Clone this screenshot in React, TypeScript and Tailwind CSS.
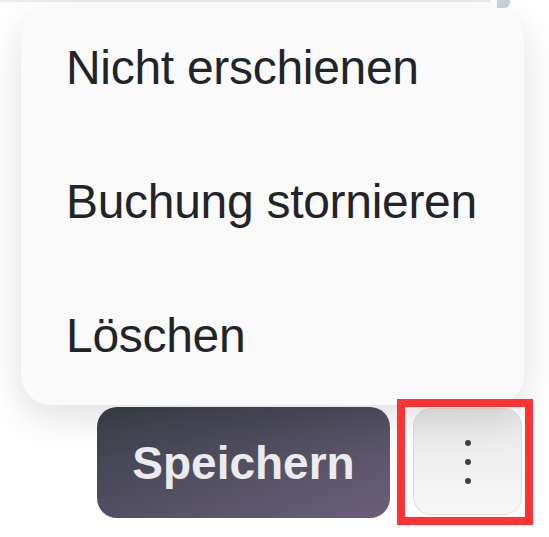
import React from "react";

const items = ["Nicht erschienen", "Buchung stornieren", "Löschen"];

const App: React.FC = () => {
  return (
    <div className="relative w-[549px] h-[537px] overflow-hidden bg-white font-['Liberation_Sans',Arial,sans-serif]">
      {/* bits of the page behind the menu */}
      <div className="absolute left-0 top-0 w-[490px] h-[2px] bg-[#ececec]" />
      <div className="absolute left-[497px] top-0 w-[13px] h-[8px] bg-[#c9d3dd] rounded-br-[6px]" />

      <div className="flex flex-col">
        <div className="relative z-10 ml-[21px] mt-[9px] w-[503px] h-[396px] rounded-[30px] bg-[#fafafa] shadow-[0_12px_40px_rgba(0,0,0,0.13)] flex flex-col gap-[86px] pl-[45px] pt-[35px]">
          {items.map((label) => (
            <div
              key={label}
              className="h-[48px] text-[48px] leading-[48px] text-[#222428] tracking-[-0.3px] whitespace-nowrap"
            >
              {label}
            </div>
          ))}
        </div>

        <div className="flex items-start gap-[23px] pl-[97px] pt-[2px]">
          <button className="w-[293px] h-[111px] rounded-[20px] bg-gradient-to-br from-[#3a3f47] to-[#6b5f7c] text-[#ebebee] text-[46px] font-bold leading-none">
            Speichern
          </button>
          <div className="relative">
            <button className="mt-[1px] w-[109px] h-[107px] rounded-[18px] border border-[#dcdcdc] bg-gradient-to-b from-[#e7e7e7] to-[#f8f8f8] flex flex-col items-center justify-center gap-[13px]">
              <span className="block w-[6px] h-[6px] rounded-full bg-[#3d4048]" />
              <span className="block w-[6px] h-[6px] rounded-full bg-[#3d4048]" />
              <span className="block w-[6px] h-[6px] rounded-full bg-[#3d4048]" />
            </button>
            <div className="absolute z-20 -left-[16px] -top-[8px] w-[136px] h-[126px] border-[8px] border-[#ff3333]" />
          </div>
        </div>
      </div>
    </div>
  );
};

export default App;
